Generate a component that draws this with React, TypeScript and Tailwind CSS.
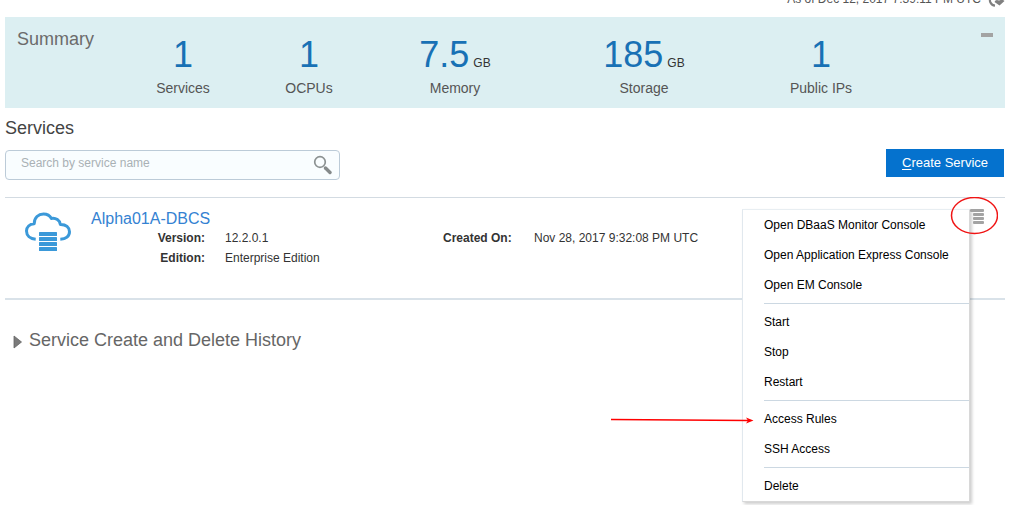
import { useState } from "react";

type Metric = { value: string; unit?: string; label: string };

const metrics: Metric[] = [
  { value: "1", label: "Services" },
  { value: "1", label: "OCPUs" },
  { value: "7.5", unit: "GB", label: "Memory" },
  { value: "185", unit: "GB", label: "Storage" },
  { value: "1", label: "Public IPs" },
];

const menuGroups: string[][] = [
  ["Open DBaaS Monitor Console", "Open Application Express Console", "Open EM Console"],
  ["Start", "Stop", "Restart"],
  ["Access Rules", "SSH Access"],
  ["Delete"],
];

function RefreshIcon() {
  return (
    <svg width="18" height="16" viewBox="0 0 18 16" aria-hidden="true">
      <path d="M8 12.700A5.500 5.500 0 0 1 4 4" fill="none" stroke="#808080" strokeWidth="2.200" />
      <path d="M7.500 9 Q8.500 6 12 7.500 Q16 6 17.500 8 L12.500 12.500 Z" fill="#808080" />
    </svg>
  );
}

function SearchIcon() {
  return (
    <svg width="20" height="20" viewBox="0 0 20 20" aria-hidden="true">
      <circle cx="8" cy="7" r="5.300" fill="none" stroke="#8b9192" strokeWidth="1.700" />
      <path d="M13.500 13 18 17.500" stroke="#858a8b" strokeWidth="3.400" strokeLinecap="round" />
    </svg>
  );
}

function CloudDatabaseIcon() {
  return (
    <svg width="48" height="41" viewBox="0 0 48 41" aria-hidden="true" className="block">
      <path
        d="M11.700 28.300C6 27.800 2.500 24.500 2.500 20C2.500 16 5.500 13 10.200 12.700C10.200 6.500 14.500 3 19.500 3C23.500 3 26 4.800 27.300 7.400C32 6.600 35.800 9.300 36.300 13.400C42 13.200 45.500 16.500 45.500 20.800C45.500 25.200 42 28 36.300 28.300"
        fill="none"
        stroke="#3b99d9"
        strokeWidth="3"
        strokeLinejoin="round"
      />
      <g fill="#3b99d9">
        <rect x="15" y="21" width="18" height="4" rx="0.500" />
        <rect x="15" y="26" width="18" height="4" rx="0.500" />
        <rect x="15" y="31" width="18" height="4" rx="0.500" />
        <rect x="15" y="36" width="18" height="4" rx="0.500" />
      </g>
    </svg>
  );
}

function ActionsIcon() {
  return (
    <svg width="14" height="15" viewBox="0 0 14 15" aria-hidden="true" className="block">
      <g fill="#a3a3a3">
        <rect x="0" y="0" width="14" height="3" rx="1" />
        <rect x="3" y="4" width="11" height="3" rx="1" />
        <rect x="3" y="8" width="11" height="3" rx="1" />
        <rect x="3" y="12" width="11" height="3" rx="1" />
      </g>
    </svg>
  );
}

function Summary() {
  return (
    <section
      aria-label="Summary"
      className="grid grid-cols-[115fr_126fr_126fr_166fr_212fr_142fr_113fr] bg-[#dceff2] py-3"
    >
      <h2 className="pl-3 text-lg leading-5 text-[#6b6b6b]">Summary</h2>
      {metrics.map((m) => (
        <div key={m.label} className="text-center whitespace-nowrap">
          <p className="pt-[6px] text-4xl leading-10 text-[#1871b5]">
            {m.value}
            {m.unit && <span className="ml-1 text-xs text-[#333]">{m.unit}</span>}
          </p>
          <p className="pt-[5px] text-sm leading-4 text-[#555]">{m.label}</p>
        </div>
      ))}
      <div className="flex justify-end pt-1 pr-3">
        <button type="button" aria-label="Collapse summary" className="h-1 w-3 bg-[#a3a3a3]" />
      </div>
    </section>
  );
}

function ActionsMenu() {
  return (
    <div
      role="menu"
      className="absolute top-0 right-full w-[228px] border border-t-[#e8eef2] border-r-[#d8d8d8] border-b-[#d8d8d8] border-l-[#e1e8ee] bg-white pl-[21px] text-xs text-black shadow-[2px_2px_3px_rgba(0,0,0,0.2)]"
    >
      {menuGroups.map((group, i) => (
        <div key={group[0]} role="group">
          {i > 0 && (
            <div role="separator" className="py-[3px]">
              <div className="h-px bg-[#ccd8e2]" />
            </div>
          )}
          {group.map((item) => (
            <button
              key={item}
              type="button"
              role="menuitem"
              className="block h-[30px] w-full text-left whitespace-nowrap"
            >
              {item}
            </button>
          ))}
        </div>
      ))}
    </div>
  );
}

function Highlights() {
  return (
    <div className="pointer-events-none absolute top-0 right-full" aria-hidden="true">
      <svg width="48" height="38" viewBox="0 0 48 38" className="absolute -top-3 -left-5">
        <ellipse cx="24.500" cy="18.500" rx="23" ry="18" fill="none" stroke="#f01414" strokeWidth="1.500" />
      </svg>
      <svg width="144" height="8" viewBox="0 0 144 8" className="absolute top-[207px] right-[216px]">
        <path d="M1 3.500 138 4.500" stroke="#f00" strokeWidth="1.300" />
        <path d="M136 1.500 143.500 4.500 136 7.500 138 4.500Z" fill="#f00" />
      </svg>
    </div>
  );
}

function ServiceRow() {
  const [open, setOpen] = useState(true);
  return (
    <article className="flex h-[103px] items-start border-t border-b-2 border-t-[#d3dbe2] border-b-[#d9e2e9] pt-[11px] pr-[21px] pl-[19px]">
      <div className="pt-[2px]">
        <CloudDatabaseIcon />
      </div>
      <div className="grow pt-px pl-[19px]">
        <a href="#alpha01a" className="block text-base leading-[18px] text-[#3482d2]">
          Alpha01A-DBCS
        </a>
        <dl className="grid grid-cols-[114px_198px_71px_1fr] gap-x-5 text-xs leading-5 whitespace-nowrap text-[#333]">
          <dt className="text-right font-bold">Version:</dt>
          <dd>12.2.0.1</dd>
          <dt className="font-bold">Created On:</dt>
          <dd>Nov 28, 2017 9:32:08 PM UTC</dd>
          <dt className="text-right font-bold">Edition:</dt>
          <dd>Enterprise Edition</dd>
        </dl>
      </div>
      <div className="relative">
        <button
          type="button"
          aria-label="Service actions"
          aria-haspopup="menu"
          aria-expanded={open}
          onClick={() => setOpen(!open)}
          className="relative z-10 block"
        >
          <ActionsIcon />
        </button>
        {open && <ActionsMenu />}
        <Highlights />
      </div>
    </article>
  );
}

export default function App() {
  return (
    <main className="min-h-screen bg-white pr-[23px] pl-[5px] font-['Liberation_Sans',Arial,sans-serif]">
      <header className="flex h-[17px] items-end justify-end gap-[6px] overflow-hidden pb-2 text-xs leading-5 text-[#555]">
        <span>As of Dec 12, 2017 7:39:11 PM UTC</span>
        <button type="button" aria-label="Refresh">
          <RefreshIcon />
        </button>
      </header>
      <Summary />
      <h2 className="pt-2 text-lg leading-6 text-[#444]">Services</h2>
      <div className="flex items-start justify-between pt-[9px] pr-px pb-[17px]">
        <div className="mt-px flex h-[30px] w-[335px] items-center rounded-[4px] border border-[#bccbd8] bg-[#f9fdff] pr-[7px] pl-[15px]">
          <input
            type="text"
            aria-label="Search by service name"
            placeholder="Search by service name"
            className="min-w-0 grow bg-transparent pb-1 text-xs text-[#333] outline-none placeholder:text-[#a9b1b5]"
          />
          <button type="button" aria-label="Search">
            <SearchIcon />
          </button>
        </div>
        <button type="button" className="h-7 bg-[#0572ce] px-4 text-[13px] whitespace-nowrap text-white">
          <span className="underline underline-offset-2">C</span>reate Service
        </button>
      </div>
      <ServiceRow />
      <h2 className="pt-7 text-lg leading-6 text-[#666]">
        <button type="button" className="flex items-center gap-[7px] pl-2">
          <svg width="9" height="14" viewBox="0 0 9 14" aria-hidden="true" className="mt-1">
            <path d="M1 1 8.500 7 1 13Z" fill="#7b7b7b" stroke="#666" strokeWidth="0.800" />
          </svg>
          Service Create and Delete History
        </button>
      </h2>
    </main>
  );
}
